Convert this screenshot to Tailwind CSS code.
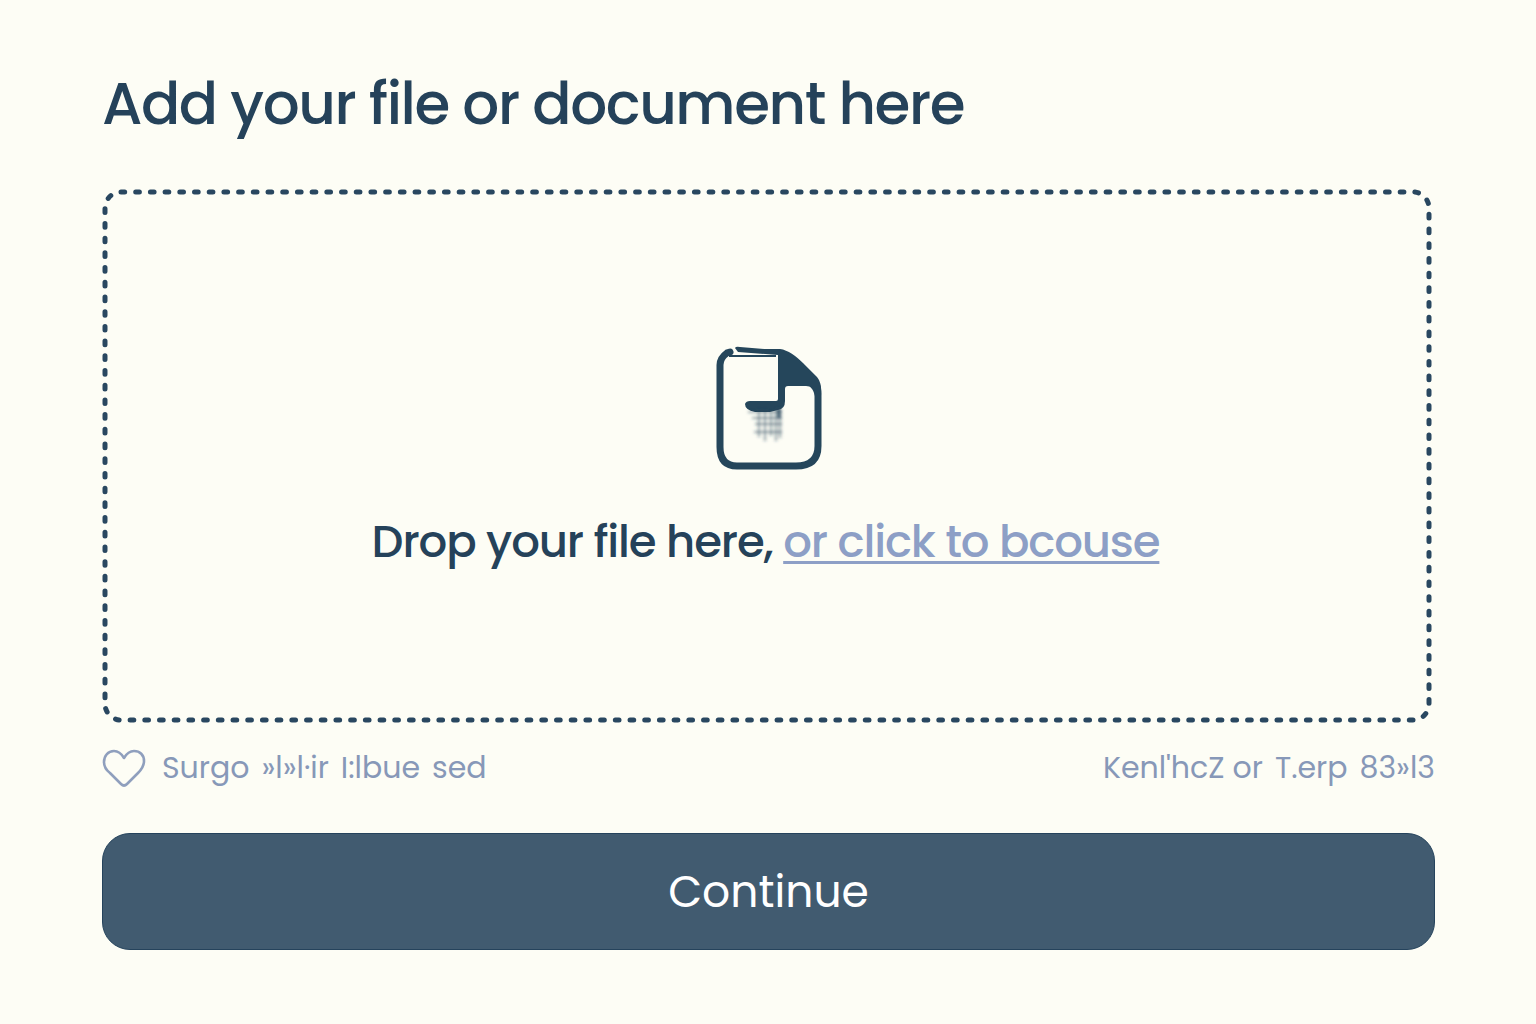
<!DOCTYPE html>
<html lang="en">
<head>
<meta charset="utf-8">
<meta name="viewport" content="width=device-width, initial-scale=1">
<title>Add your file</title>
<script src="https://cdn.jsdelivr.net/npm/@tailwindcss/browser@4"></script>
</head>
<body class="min-h-screen bg-[#fdfdf5] font-['Poppins','Inter',sans-serif] text-[#25425a]">
<main class="flex flex-col pl-[102px] pr-[101px] pt-[64px] pb-[74px]">
  <h1 class="text-[58px] leading-[80px] font-medium tracking-tight whitespace-nowrap">Add your file or document here</h1>

  <section class="relative mt-[45px] mr-[3px] flex h-[534px] flex-col items-center pt-[154px]" aria-label="File drop area">
    <svg class="absolute inset-0 h-full w-full overflow-visible" aria-hidden="true">
      <svg x="3" y="3" width="100%" height="100%" overflow="visible">
        <rect class="h-[calc(100%-6px)] w-[calc(100%-6px)]" rx="16" fill="none" stroke="#294760" stroke-width="5" stroke-linecap="round" pathLength="1000" stroke-dasharray="1 3"/>
      </svg>
    </svg>
    <svg class="h-[130px] w-[112px]" viewBox="711 343 112 130" fill="none" aria-hidden="true">
      <defs><filter id="soft"><feGaussianBlur stdDeviation="1.4"/></filter></defs>
      <path d="M730 352 L727 353 Q720 358 720 365 V447 C720 460 726 466 737 466 H796 C811 466 818 459 818 446 V397 C818 388 817 384 813 381" stroke="#25465b" stroke-width="7" stroke-linecap="round"/>
      <path d="M735 348 Q736 346 740 347 L764 349 H780 C788 350 796 356 803 363 L816 376 C820 380 822 386 821 396 L815 396 C813 389 811 386 806 386 H788 Q785 386 785 389 V401 Q785 409 778 410 L770 412 H755 Q745 410 745 404 Q746 401 750 401 H776 Q778 401 778 399 V355 L738 352 Z" fill="#25465b"/>
      <path d="M729 356 L776 356" stroke="#25465b" stroke-width="2"/>
      <g filter="url(#soft)" stroke="#25465b">
        <path d="M748 412H782M752 418H782M755 424H782M754 432H782" stroke-width="2" opacity=".45"/>
        <path d="M759 409V437M765 409V441M771 411V436M776 409V441M780 409V438" stroke-width="3" opacity=".35"/>
        <path d="M779 408V418" stroke-width="4" opacity=".7"/>
      </g>
    </svg>
    <p class="mt-[39px] mr-[3px] text-[45px] leading-[60px] font-medium tracking-tight whitespace-nowrap">Drop your file here, <a href="#" class="text-[#8d9fc6] underline decoration-3 underline-offset-[4px]">or click to bcouse</a></p>
  </section>

  <div class="mt-[21px] flex h-[48px] items-center text-[30px] leading-[40px] text-[#8798b8]">
    <svg class="mr-[16px] h-[42px] w-[44px]" viewBox="0 0 44 42" fill="none" stroke="#8f9fbd" stroke-width="2.6" stroke-linejoin="round" aria-hidden="true">
      <path d="M22 11 C19 6 16 4 12 4 C6 4 2 9 2 15 C2 20 4 23 8 26 L19 37 Q22 40 25 37 L36 26 C40 22 42 19 42 14 C42 8 38 4 32 4 C28 4 25 6 22 11Z"/>
    </svg>
    <p class="flex gap-3 whitespace-nowrap"><span>Surgo</span> <span>»l»l·ir</span> <span>I:lbue</span> <span>sed</span></p>
    <p class="ml-auto flex gap-3 whitespace-nowrap"><span>Kenl'hcZ or</span> <span>T.erp</span> <span>83»l3</span></p>
  </div>

  <button type="button" class="mt-[41px] h-[117px] w-full rounded-[28px] border border-[#25435c] bg-[#415b70] text-[44px] leading-[60px] text-white">Continue</button>
</main>
</body>
</html>
